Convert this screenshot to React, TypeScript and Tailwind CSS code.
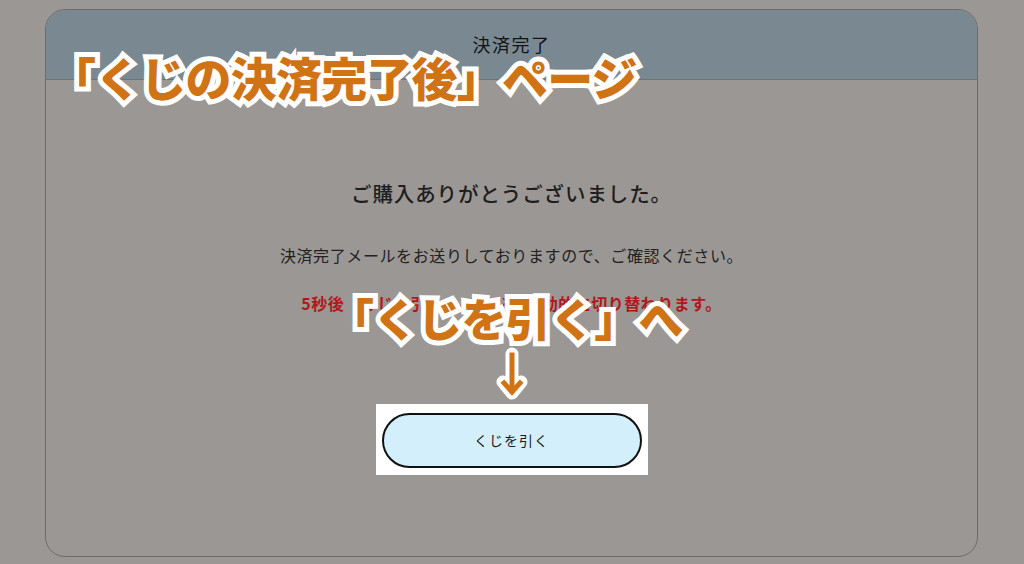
import React from "react";

const JP = "font-['Noto_Sans_CJK_JP','Noto_Sans',sans-serif]";

export default function App() {
  return (
    <div className={`relative w-[1024px] h-[564px] overflow-hidden bg-[#9b9794] ${JP}`}>
      <div className="pt-[9px] pl-[45px] pr-[46px]">
        <div className="h-[548px] rounded-[20px] border border-[#6f6b69] bg-[#9b9794] overflow-hidden flex flex-col">
          <div className="h-[70px] shrink-0 bg-[#7a8891] border-b border-[#6e7378] flex items-center justify-center">
            <span className="text-[18px] text-[#141414] tracking-[1.5px]">決済完了</span>
          </div>
          <div className="flex flex-col items-center pt-[98px]">
            <p className="text-[20.5px] leading-[30px] font-medium text-[#1e1e1e] tracking-[0.9px]">
              ご購入ありがとうございました。
            </p>
            <p className="mt-[35px] text-[16px] leading-[24px] text-[#222] tracking-[0.6px]">
              決済完了メールをお送りしておりますので、ご確認ください。
            </p>
            <p className="mt-[24px] text-[16px] leading-[24px] font-bold text-[#b0191b] tracking-[0.5px]">
              5秒後「くじを引く」ページへ自動的に切り替わります。
            </p>
            <div className="mt-[89px] w-[272px] h-[71px] bg-white pt-[9px] pl-[6px]">
              <button className="w-[260px] h-[55px] rounded-full border-2 border-[#111] bg-[#d3effc] text-[14px] text-[#1a1a1a] tracking-[1px]">
                くじを引く
              </button>
            </div>
          </div>
        </div>
      </div>

      {/* annotation overlays */}
      <div className="absolute left-[50px] top-[44px] text-[46px] leading-[64px] font-black text-[#d07315] [-webkit-text-stroke:10px_white] [paint-order:stroke_fill] whitespace-nowrap tracking-[-0.8px]">
        「くじの決済完了後」ページ
      </div>
      <div className="absolute left-[329px] top-[286px] text-[45px] leading-[64px] font-black text-[#d07315] [-webkit-text-stroke:10px_white] [paint-order:stroke_fill] whitespace-nowrap tracking-[-0.8px]">
        「くじを引く」へ
      </div>
      <svg className="absolute left-[496px] top-[347px]" width="32" height="56" viewBox="0 0 32 56">
        <g fill="none" stroke="white" strokeWidth="13" strokeLinecap="round" strokeLinejoin="round">
          <path d="M16 7 V44" />
          <path d="M7 35 L16 46 L25 35" />
        </g>
        <g fill="none" stroke="#d07315" strokeWidth="5" strokeLinecap="square" strokeLinejoin="miter">
          <path d="M16 8 V44" />
          <path d="M8 36 L16 45 L24 36" />
        </g>
      </svg>
    </div>
  );
}
